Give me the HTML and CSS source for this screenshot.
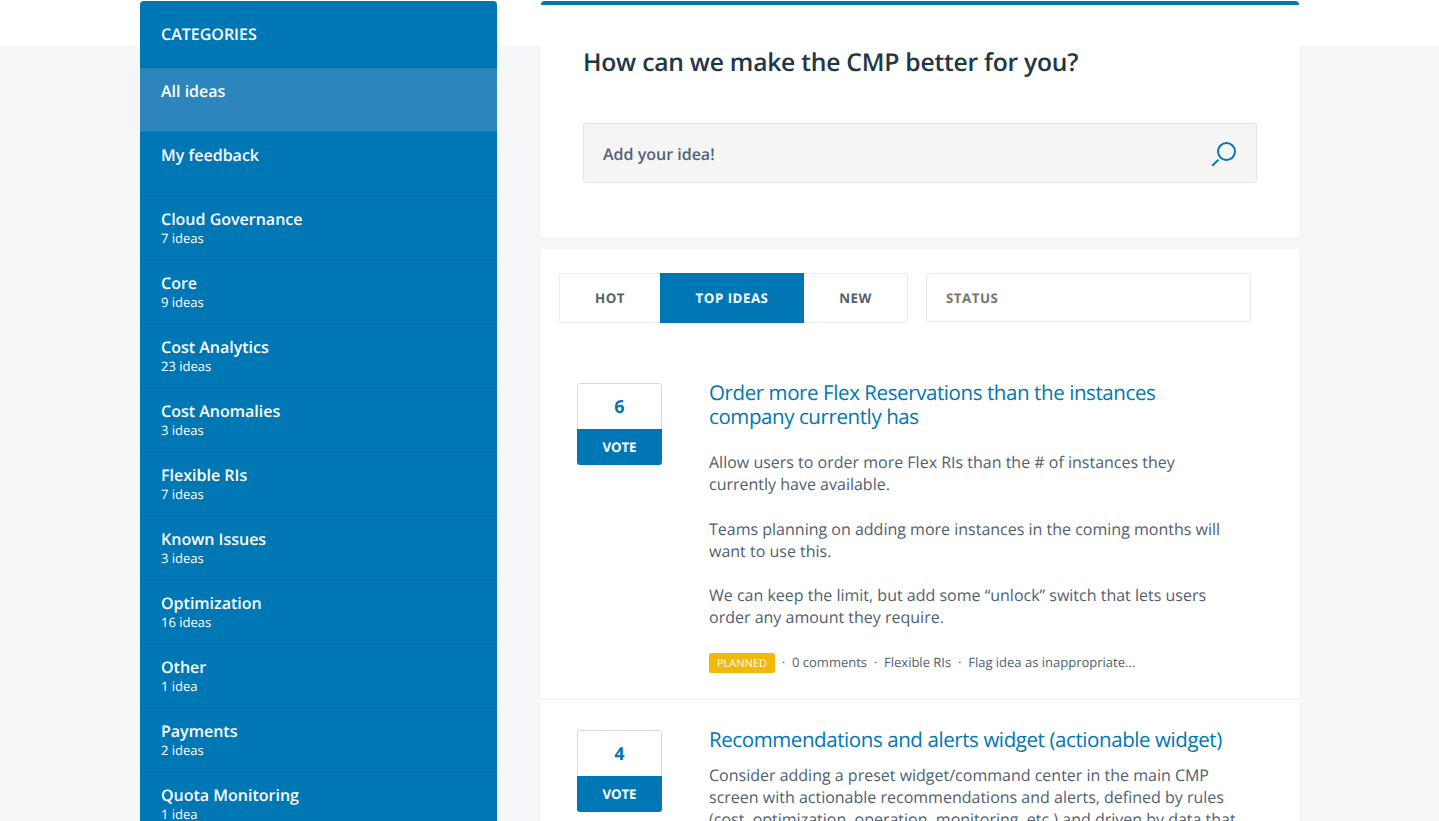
FILE: index.html
```html
<!DOCTYPE html>
<html lang="en">
<head>
<meta charset="utf-8">
<title>CMP ideas</title>
<link rel="stylesheet" href="styles.css">
</head>
<body>
<div class="page">
  <nav class="sidebar">
    <h2 class="side-title">CATEGORIES</h2>
    <a class="cat active"><b>All ideas</b></a>
    <a class="cat"><b>My feedback</b></a>
    <a class="cat"><b>Cloud Governance</b><span>7 ideas</span></a>
    <a class="cat"><b>Core</b><span>9 ideas</span></a>
    <a class="cat"><b>Cost Analytics</b><span>23 ideas</span></a>
    <a class="cat"><b>Cost Anomalies</b><span>3 ideas</span></a>
    <a class="cat"><b>Flexible RIs</b><span>7 ideas</span></a>
    <a class="cat"><b>Known Issues</b><span>3 ideas</span></a>
    <a class="cat"><b>Optimization</b><span>16 ideas</span></a>
    <a class="cat"><b>Other</b><span>1 idea</span></a>
    <a class="cat"><b>Payments</b><span>2 ideas</span></a>
    <a class="cat"><b>Quota Monitoring</b><span>1 idea</span></a>
  </nav>
  <main class="content">
    <section class="ask">
      <h1 class="question">How can we make the CMP better for you?</h1>
      <div class="search">
        <span>Add your idea!</span>
        <svg class="search-icon" width="28" height="28" viewBox="0 0 28 28" fill="none" stroke="#0077b5" stroke-width="1.900"><circle cx="17.500" cy="11.500" r="8.500"/><path d="M9.500 19.800L3.200 25.700"/></svg>
      </div>
    </section>
    <section class="ideas">
      <div class="filters">
        <div class="tabs"><span class="tab hot">HOT</span><span class="tab top">TOP IDEAS</span><span class="tab new">NEW</span></div>
        <div class="status">STATUS</div>
      </div>
      <article class="idea first">
        <div class="vote"><div class="count">6</div><div class="vote-btn">VOTE</div></div>
        <div class="body">
          <h3 class="idea-title">Order more Flex Reservations than the instances<br>company currently has</h3>
          <div class="text spaced">
            <p>Allow users to order more Flex RIs than the # of instances they<br>currently have available.</p>
            <p>Teams planning on adding more instances in the coming months will<br>want to use this.</p>
            <p>We can keep the limit, but add some “unlock” switch that lets users<br>order any amount they require.</p>
          </div>
          <div class="meta"><span class="badge">PLANNED</span><i>·</i><span>0 comments</span><i>·</i><span>Flexible RIs</span><i>·</i><span>Flag idea as inappropriate…</span></div>
        </div>
      </article>
      <article class="idea second">
        <div class="vote"><div class="count">4</div><div class="vote-btn">VOTE</div></div>
        <div class="body">
          <h3 class="idea-title">Recommendations and alerts widget (actionable widget)</h3>
          <div class="text">
            <p>Consider adding a preset widget/command center in the main CMP<br>screen with actionable recommendations and alerts, defined by rules<br>(cost, optimization, operation, monitoring, etc.) and driven by data that</p>
          </div>
        </div>
      </article>
    </section>
  </main>
</div>
</body>
</html>
```
FILE: styles.css
```css
* { box-sizing: border-box; margin: 0; }
body { height: 821px; overflow: hidden; font-family: "Open Sans", sans-serif; text-rendering: geometricPrecision; background: linear-gradient(#fff 46px, #f5f6f8 46px); }
.page { display: flex; gap: 44px; height: 821px; overflow: hidden; padding: 1px 0 0 140px; }
.sidebar { width: 357px; height: 840px; flex: none; background: #0077b5; color: #fff; border-radius: 4px 4px 0 0; }
.side-title { height: 67px; padding: 22px 21px 0; font-size: 16px; line-height: 22px; font-weight: 600; border-bottom: 1px solid #046fab; }
.cat { display: block; height: 64px; padding: 11px 21px 0; border-bottom: 1px solid #046fab; }
.cat b { display: block; font-size: 16px; line-height: 24px; font-weight: 600; }
.cat span { display: block; font-size: 13px; line-height: 18px; margin-top: -2px; }
.active { background: #2c85bb; border-bottom-color: #2279b2; }
.content { width: 758px; flex: none; }
.ask { height: 236px; background: #fff; border-top: 4px solid #0077b5; border-radius: 4px 4px 2px 2px; padding: 41px 42px 0; }
.question { font-size: 24.700px; letter-spacing: -.25px; line-height: 34px; font-weight: 600; color: #233646; }
.search { display: flex; justify-content: space-between; align-items: center; height: 60px; margin-top: 43px; padding: 2px 19px 0 19px; border: 1px solid #e1e3e6; border-radius: 3px; background: #f5f5f5; color: #575f78; font-size: 16px; font-weight: 600; }
.ideas { margin-top: 12px; height: 600px; background: #fff; }
.filters { display: flex; gap: 18px; padding: 24px 18px 0; }
.tabs { display: flex; width: 349px; height: 50px; border: 1px solid #ebecee; border-radius: 3px; }
.tab { font-size: 13.300px; font-weight: 700; line-height: 48px; letter-spacing: .5px; text-align: center; color: #56616c; }
.hot { width: 100px; }
.top { width: 144px; margin: -1px 0; line-height: 50px; background: #0077b5; color: #fff; }
.new { width: 103px; }
.status { width: 325px; height: 49px; padding-left: 19px; line-height: 48px; border: 1px solid #ebebeb; border-radius: 3px; font-size: 13.300px; font-weight: 700; letter-spacing: .5px; color: #757575; }
.idea { display: flex; gap: 47px; padding-left: 36px; }
.first { height: 377px; padding-top: 60px; border-bottom: 2px solid #f3f4f6; }
.second { padding-top: 30px; }
.vote { width: 85px; height: 82px; flex: none; text-align: center; border-radius: 3px; overflow: hidden; }
.count { height: 46px; line-height: 46px; border: 1px solid #d3d9e6; border-bottom: 0; border-radius: 3px 3px 0 0; font-size: 18px; font-weight: 700; color: #0077b5; }
.vote-btn { height: 36px; line-height: 36px; background: #0077b5; color: #fff; font-size: 13.300px; letter-spacing: -.1px; font-weight: 700; }
.body { white-space: nowrap; }
.idea-title { font-size: 20.500px; letter-spacing: -.41px; line-height: 24px; font-weight: 400; color: #0077b5; margin-top: -2px; }
.text { margin-top: 12px; font-size: 16px; line-height: 22px; color: #51606e; }
.spaced { margin-top: 22px; }
.spaced p + p { margin-top: 22.500px; }
.meta { display: flex; align-items: center; margin-top: 24px; height: 20px; font-size: 13px; color: #51606e; }
.meta i { width: 17px; text-align: center; font-style: normal; }
.badge { width: 66px; height: 20px; line-height: 21px; margin-top: 1px; text-align: center; border-radius: 2px; background: #f0b90b; color: #fff; font-size: 11px; }
```
